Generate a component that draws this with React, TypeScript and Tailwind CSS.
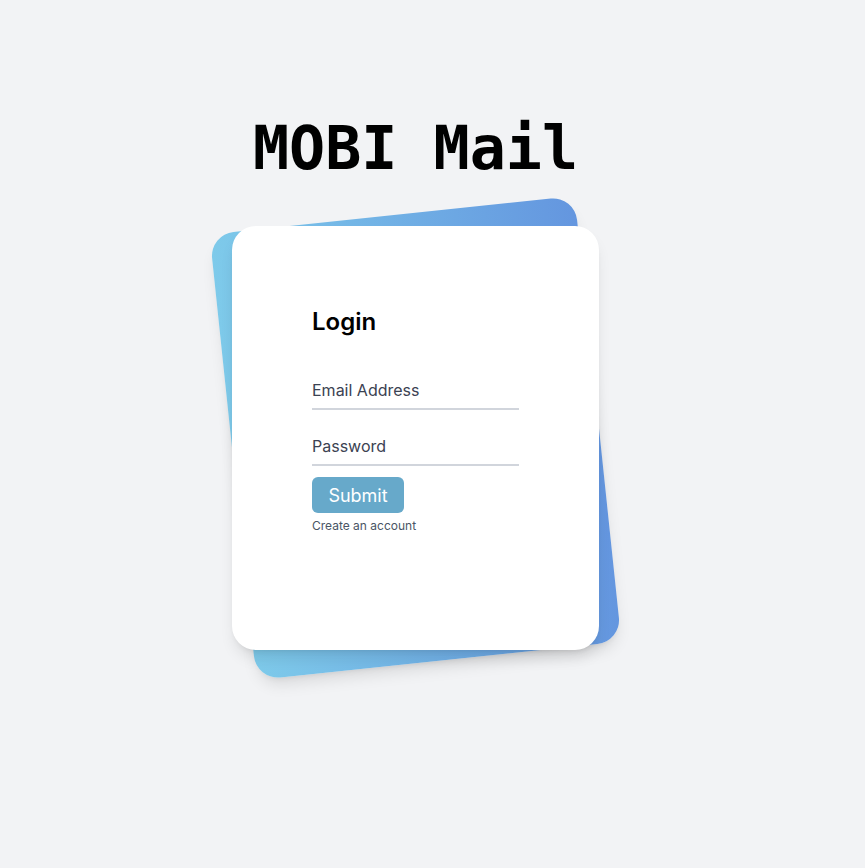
export default function App() {
  return (
    <div className="min-h-screen bg-[#f2f3f5] font-['Inter','Noto_Sans',sans-serif]">
      <div className="flex flex-col items-center pt-[118px] pr-[34px]">
        {/* Title */}
        <h1 className="mb-12 font-['DejaVu_Sans_Mono',monospace] text-[60px] font-bold leading-none text-black">
          MOBI Mail
        </h1>

        {/* Card stack */}
        <div className="relative w-[367px]">
          <div className="absolute inset-x-0 -inset-y-[12px] -rotate-6 rounded-3xl bg-gradient-to-r from-[#7ecaea] to-[#6496df] shadow-lg" />
          <div className="relative rounded-3xl bg-white px-20 pt-20 pb-[116px] shadow-lg">
            <h2 className="text-2xl leading-8 font-semibold text-black">Login</h2>
            <div className="flex flex-col gap-4 pt-8 text-base text-gray-700">
              <input
                type="text"
                placeholder="Email Address"
                className="h-10 w-full border-b-2 border-gray-300 bg-transparent pt-[2px] placeholder:text-[#3b4252] focus:outline-none"
              />
              <input
                type="password"
                placeholder="Password"
                className="h-10 w-full border-b-2 border-gray-300 bg-transparent pt-[2px] placeholder:text-[#3b4252] focus:outline-none"
              />
            </div>
            <button className="mt-[11px] h-9 w-[92px] rounded-md bg-[#67a9ca] pt-px text-lg leading-7 text-white">
              Submit
            </button>
            <p className="mt-[5px] text-xs leading-4 text-gray-600">Create an account</p>
          </div>
        </div>
      </div>
    </div>
  );
}
